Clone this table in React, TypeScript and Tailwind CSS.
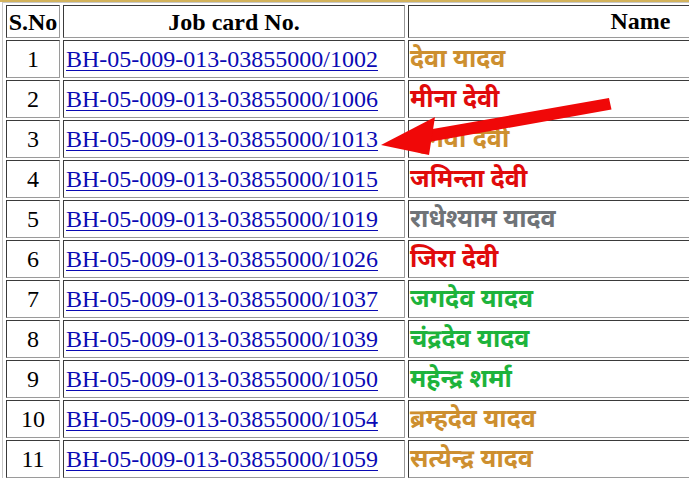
const rows = [
  { no: 1, card: "BH-05-009-013-03855000/1002", name: "देवा यादव", color: "text-[#cd8f2f]" },
  { no: 2, card: "BH-05-009-013-03855000/1006", name: "मीना देवी", color: "text-[#e00b0b]" },
  { no: 3, card: "BH-05-009-013-03855000/1013", name: "सुनवा देवी", color: "text-[#cd8f2f]" },
  { no: 4, card: "BH-05-009-013-03855000/1015", name: "जमिन्ता देवी", color: "text-[#e00b0b]" },
  { no: 5, card: "BH-05-009-013-03855000/1019", name: "राधेश्याम यादव", color: "text-[#6f7377]" },
  { no: 6, card: "BH-05-009-013-03855000/1026", name: "जिरा देवी", color: "text-[#e00b0b]" },
  { no: 7, card: "BH-05-009-013-03855000/1037", name: "जगदेव यादव", color: "text-[#1db33b]" },
  { no: 8, card: "BH-05-009-013-03855000/1039", name: "चंद्रदेव यादव", color: "text-[#1db33b]" },
  { no: 9, card: "BH-05-009-013-03855000/1050", name: "महेन्द्र शर्मा", color: "text-[#1db33b]" },
  { no: 10, card: "BH-05-009-013-03855000/1054", name: "ब्रम्हदेव यादव", color: "text-[#cd8f2f]" },
  { no: 11, card: "BH-05-009-013-03855000/1059", name: "सत्येन्द्र यादव", color: "text-[#cd8f2f]" },
]

const cell =
  "border border-t-[#3a3a3a] border-l-[#3a3a3a] border-b-[#9a9a9a] border-r-[#9a9a9a] align-middle"

const App = () => {
  return (
    <div className="relative h-[478px] w-[689px] overflow-hidden bg-white font-['Liberation_Serif','Times_New_Roman',serif] text-[24px] leading-[28px] text-black">
      {/* gold rule above the table */}
      <div className="h-[2px] bg-[#d3b35c]" />

      <table className="ml-[2px] w-[872px] table-fixed border-separate border-spacing-x-[3px] border-spacing-y-[2px] border border-t-[#c8c8c8] border-l-[#c8c8c8] border-b-[#555] border-r-[#555]">
        <thead>
          <tr>
            <th className={`${cell} h-[33px] w-[54px] px-[1px] font-bold`}>S.No</th>
            <th className={`${cell} h-[33px] w-[342px] px-[2px] font-bold`}>Job card No.</th>
            <th className={`${cell} h-[33px] w-[465px] px-[2px] pb-[2px] font-bold`}>Name</th>
          </tr>
        </thead>
        <tbody>
          {rows.map((r) => (
            <tr key={r.no}>
              <td className={`${cell} h-[38px] text-center`}>{r.no}</td>
              <td className={`${cell} h-[38px] px-[2px] whitespace-nowrap`}>
                <a href="#" className="text-[#0a0ab4] underline decoration-1 underline-offset-[3px]">
                  {r.card}
                </a>
              </td>
              <td
                className={`${cell} h-[38px] px-[1px] pt-[3px] whitespace-nowrap font-['Noto_Sans_Devanagari','Lohit_Devanagari','Noto_Sans',sans-serif] text-[25px] leading-[28px] font-bold ${r.color}`}
              >
                {r.name}
              </td>
            </tr>
          ))}
        </tbody>
      </table>

      {/* red pointer arrow */}
      <svg className="pointer-events-none absolute left-0 top-0" width="689" height="478" viewBox="0 0 689 478">
        <polygon points="424,130.5 609,98 611.5,109.5 426,142.5" fill="#f00808" />
        <polygon points="381,145 435,117 429,155" fill="#f00808" />
      </svg>
    </div>
  )
}

export default App
